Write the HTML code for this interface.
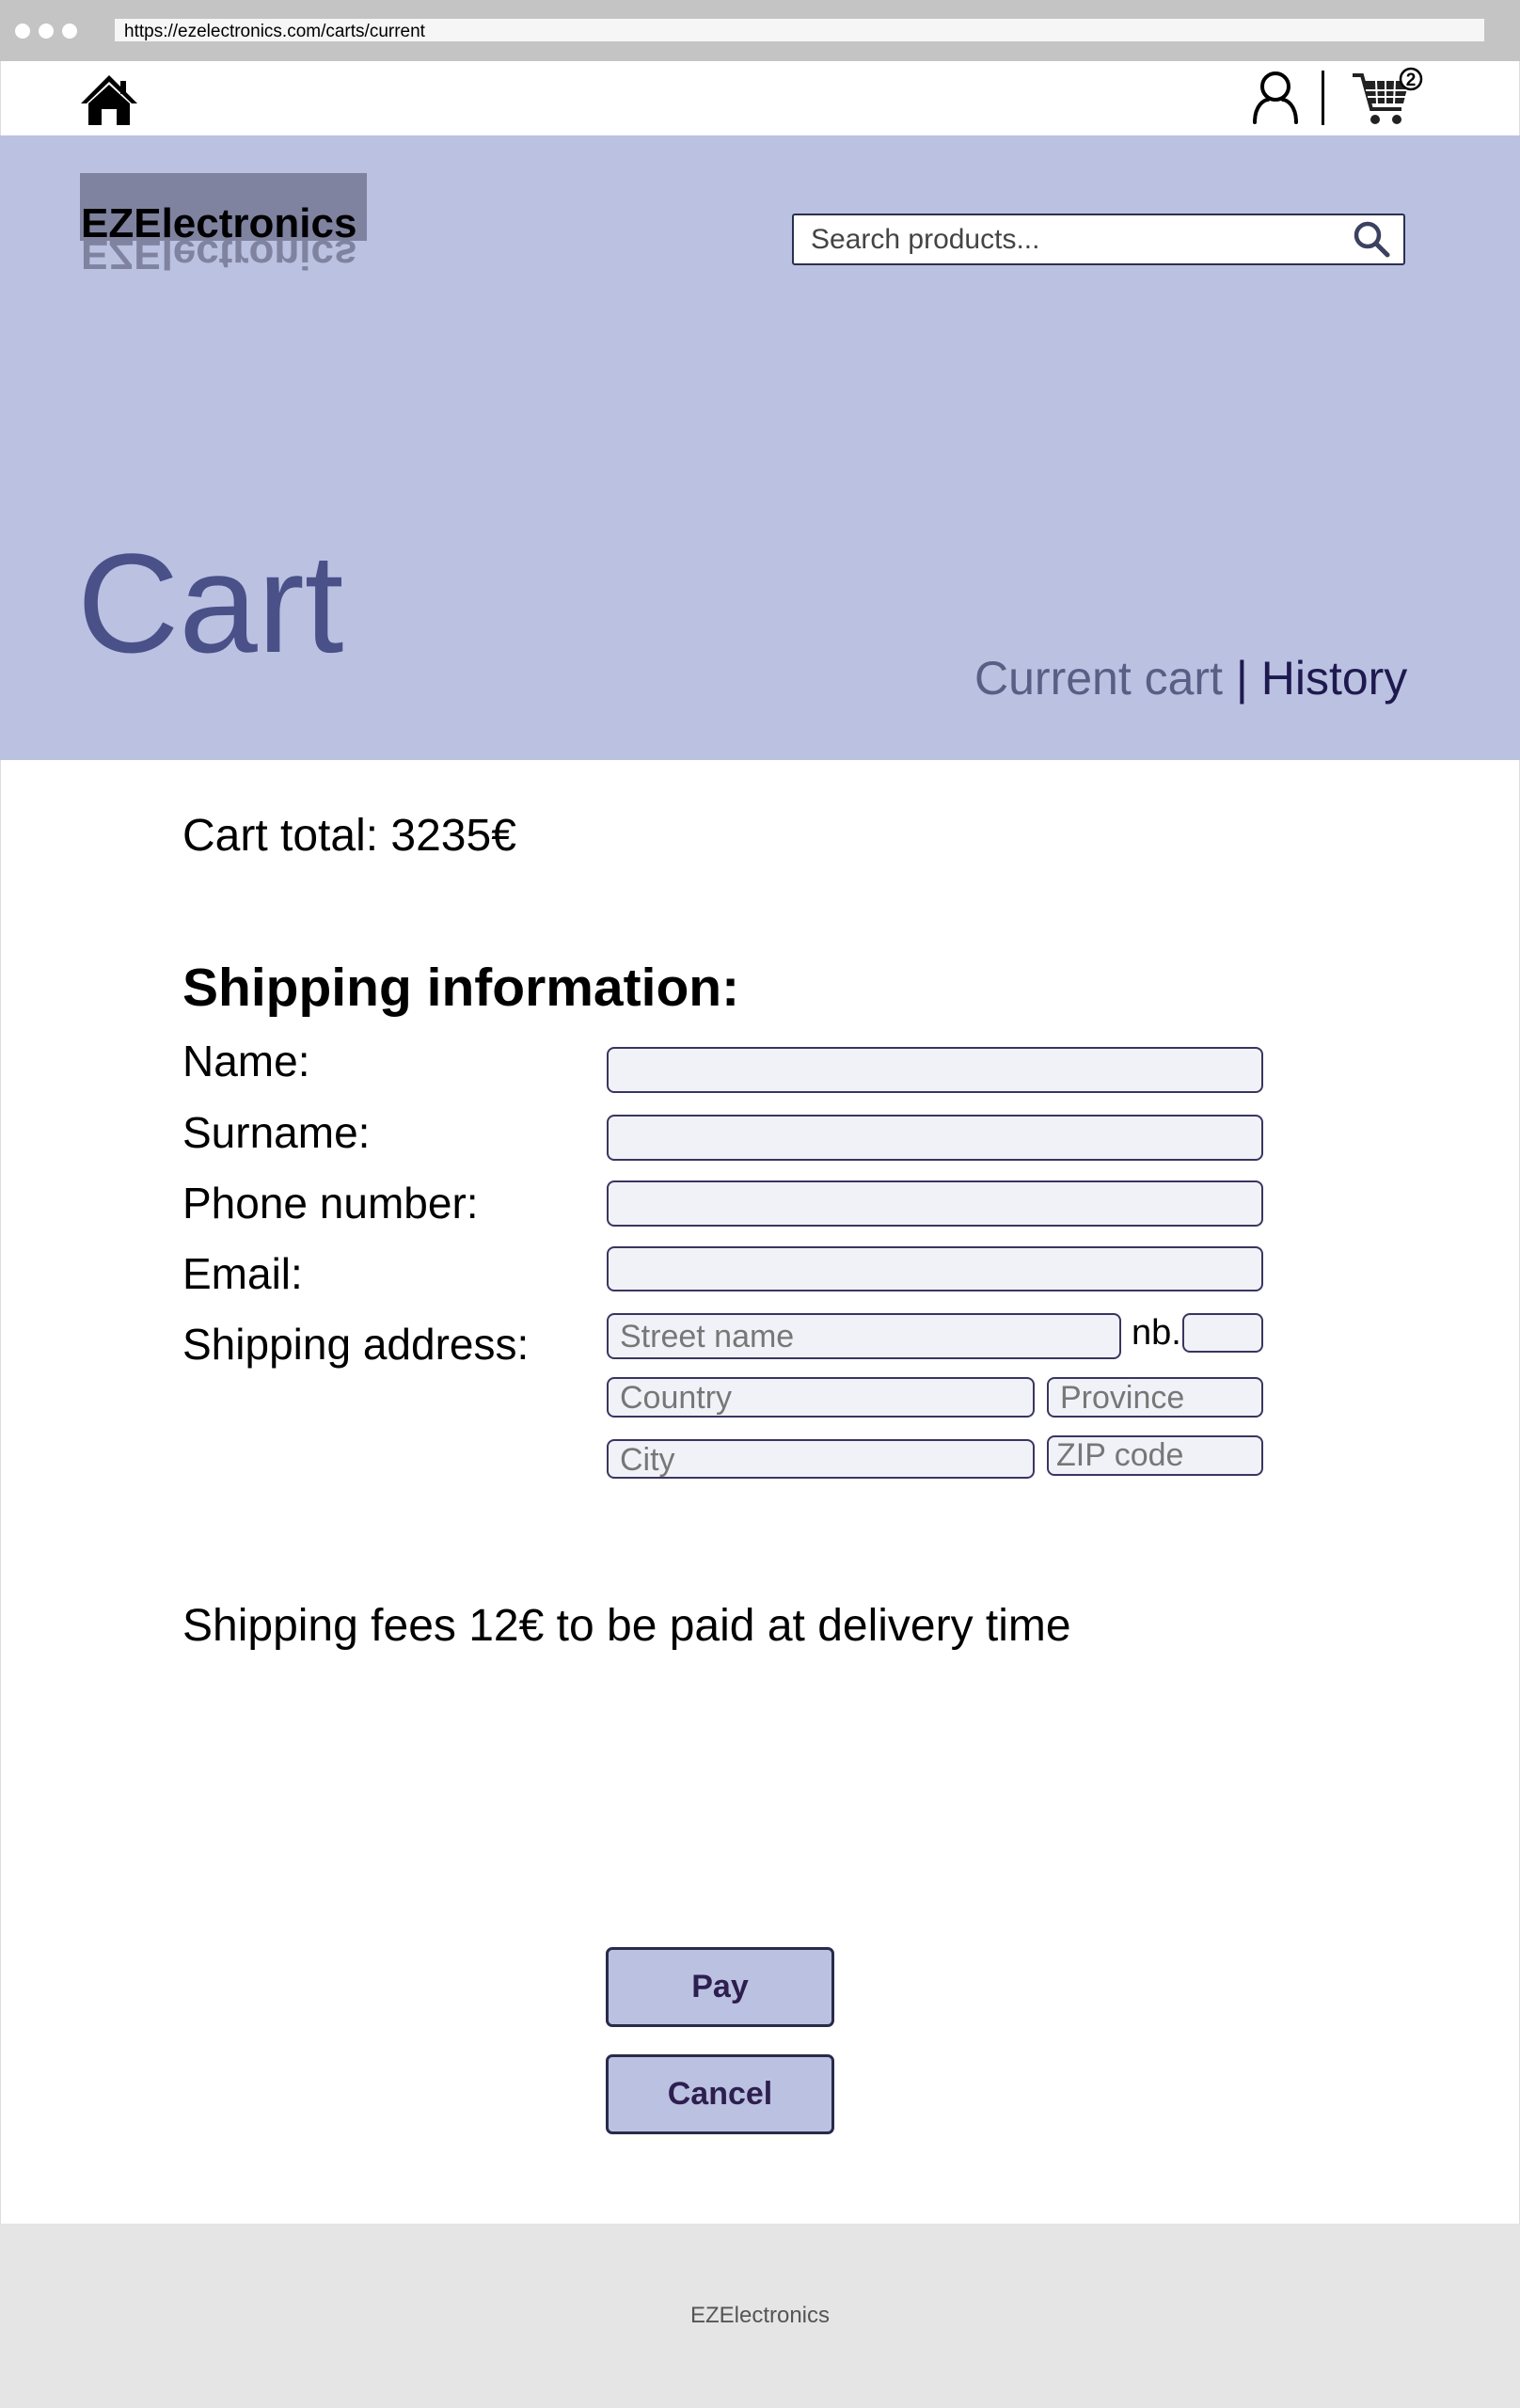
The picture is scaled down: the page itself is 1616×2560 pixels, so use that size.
<!DOCTYPE html>
<html><head><meta charset="utf-8"><style>
*{margin:0;padding:0;box-sizing:border-box}
body{width:1616px;height:2560px;position:relative;background:#fff;font-family:"Liberation Sans","DejaVu Sans",sans-serif;overflow:hidden}
.a{position:absolute}
.in{position:absolute;background:#f1f2f8;border:2px solid #3a3560;border-radius:8px;color:#777;font-size:34px;padding-left:12px;line-height:40px}
.lbl{position:absolute;left:194px;font-size:46px;color:#000}
.btn{position:absolute;left:644px;width:243px;height:85px;background:#bbc1e1;border:3px solid #2a2a4a;border-radius:7px;color:#2d1f4f;font-weight:bold;font-size:34px;text-align:center;line-height:79px}
</style></head><body>
<div class="a" style="left:0;top:0;width:1616px;height:65px;background:#c4c4c4"></div>
<div class="a" style="left:16px;top:25px;width:16px;height:16px;border-radius:50%;background:#fff"></div>
<div class="a" style="left:41px;top:25px;width:16px;height:16px;border-radius:50%;background:#fff"></div>
<div class="a" style="left:66px;top:25px;width:16px;height:16px;border-radius:50%;background:#fff"></div>
<div class="a" style="left:122px;top:20px;width:1456px;height:24px;background:#f6f6f6;font-size:19px;line-height:28px;padding-left:10px;color:#000">https://ezelectronics.com/carts/current</div>
<div class="a" style="left:0;top:65px;width:1616px;height:79px;background:#fff;border-left:1px solid #ddd;border-right:1px solid #ddd"></div>
<svg class="a" style="left:84px;top:78px" width="64" height="56" viewBox="0 0 64 56"><path d="M32 2 L2 32 L8 32 L32 9 L56 32 L62 32 Z" fill="#000"/><path d="M10 32 L32 12 L54 32 L54 55 L40 55 L40 38 L24 38 L24 55 L10 55 Z" fill="#000"/><rect x="44" y="8" width="6" height="14" fill="#000"/></svg>
<svg class="a" style="left:1330px;top:74px" width="52" height="58" viewBox="0 0 52 58"><circle cx="26" cy="18" r="14" fill="none" stroke="#000" stroke-width="4"/><path d="M4 56 C4 38 14 32 18 32 M48 56 C48 38 38 32 34 32" fill="none" stroke="#000" stroke-width="4" stroke-linecap="round"/></svg>
<div class="a" style="left:1405px;top:75px;width:3px;height:58px;background:#000"></div>
<svg class="a" style="left:1436px;top:70px" width="80" height="66" viewBox="0 0 80 66"><path d="M2 10 L12 10 L22 46 L54 46" fill="none" stroke="#222" stroke-width="4"/><path d="M13 16 L62 16 L56 40 L20 40 Z" fill="#222"/><g stroke="#fff" stroke-width="2"><line x1="16" y1="26" x2="60" y2="26"/><line x1="18" y1="33" x2="58" y2="33"/><line x1="27" y1="16" x2="28" y2="40"/><line x1="37" y1="16" x2="37" y2="40"/><line x1="47" y1="16" x2="46" y2="40"/></g><circle cx="26" cy="57" r="5" fill="#222"/><circle cx="49" cy="57" r="5" fill="#222"/><circle cx="64" cy="14" r="11" fill="#fff" stroke="#000" stroke-width="2.5"/><text x="64" y="21" font-size="19" text-anchor="middle" font-family="Liberation Sans" font-weight="bold">2</text></svg>
<div class="a" style="left:0;top:144px;width:1616px;height:664px;background:#bbc1e1"></div>
<div class="a" style="left:85px;top:184px;width:305px;height:72px;background:#7f83a0"></div>
<div class="a" style="left:86px;top:213px;font-size:44px;font-weight:bold;color:#000;letter-spacing:0px">EZElectronics</div>
<div class="a" style="left:86px;top:252px;font-size:44px;font-weight:bold;color:#7f83a0;letter-spacing:0px;transform:scaleY(-1);height:40px;overflow:hidden;line-height:44px">EZElectronics</div>
<div class="a" style="left:842px;top:227px;width:652px;height:55px;background:#fff;border:2px solid #2a3050;border-radius:3px;font-size:30px;color:#444;line-height:51px;padding-left:18px">Search products...</div>
<svg class="a" style="left:1438px;top:234px" width="42" height="42" viewBox="0 0 42 42"><circle cx="16" cy="16" r="12" fill="none" stroke="#3d4160" stroke-width="4.5"/><line x1="25" y1="25" x2="37" y2="37" stroke="#3d4160" stroke-width="5" stroke-linecap="round"/></svg>
<div class="a" style="left:82px;top:556px;font-size:150px;color:#4a5088;line-height:170px">Cart</div>
<div class="a" style="left:1036px;top:690px;font-size:50px;color:#5a5e85;white-space:nowrap;line-height:62px">Current cart <span style="color:#1e1a4f">| History</span></div>
<div class="a" style="left:194px;top:861px;font-size:48px;color:#000">Cart total: 3235€</div>
<div class="a" style="left:194px;top:1017px;font-size:57px;font-weight:bold;color:#000">Shipping information:</div>
<div class="lbl" style="top:1101px">Name:</div>
<div class="lbl" style="top:1177px">Surname:</div>
<div class="lbl" style="top:1252px">Phone number:</div>
<div class="lbl" style="top:1327px">Email:</div>
<div class="lbl" style="top:1402px">Shipping address:</div>
<div class="in" style="left:645px;top:1113px;width:698px;height:49px"></div>
<div class="in" style="left:645px;top:1185px;width:698px;height:49px"></div>
<div class="in" style="left:645px;top:1255px;width:698px;height:49px"></div>
<div class="in" style="left:645px;top:1325px;width:698px;height:48px"></div>
<div class="in" style="left:645px;top:1396px;width:547px;height:49px;line-height:47px">Street name</div>
<div class="a" style="left:1203px;top:1396px;font-size:38px;color:#000">nb.</div>
<div class="in" style="left:1257px;top:1396px;width:86px;height:42px"></div>
<div class="in" style="left:645px;top:1464px;width:455px;height:43px">Country</div>
<div class="in" style="left:1113px;top:1464px;width:230px;height:43px">Province</div>
<div class="in" style="left:645px;top:1530px;width:455px;height:42px">City</div>
<div class="in" style="left:1113px;top:1526px;width:230px;height:43px;padding-left:8px;line-height:38px">ZIP code</div>
<div class="a" style="left:194px;top:1701px;font-size:48px;color:#000">Shipping fees 12€ to be paid at delivery time</div>
<div class="btn" style="top:2070px">Pay</div>
<div class="btn" style="top:2184px">Cancel</div>
<div class="a" style="left:0;top:808px;width:1px;height:1556px;background:#ddd"></div>
<div class="a" style="left:1615px;top:808px;width:1px;height:1556px;background:#ddd"></div>
<div class="a" style="left:0;top:2364px;width:1616px;height:196px;background:#e5e5e5;text-align:center;font-size:24px;color:#555;line-height:196px">EZElectronics</div>
</body></html>
